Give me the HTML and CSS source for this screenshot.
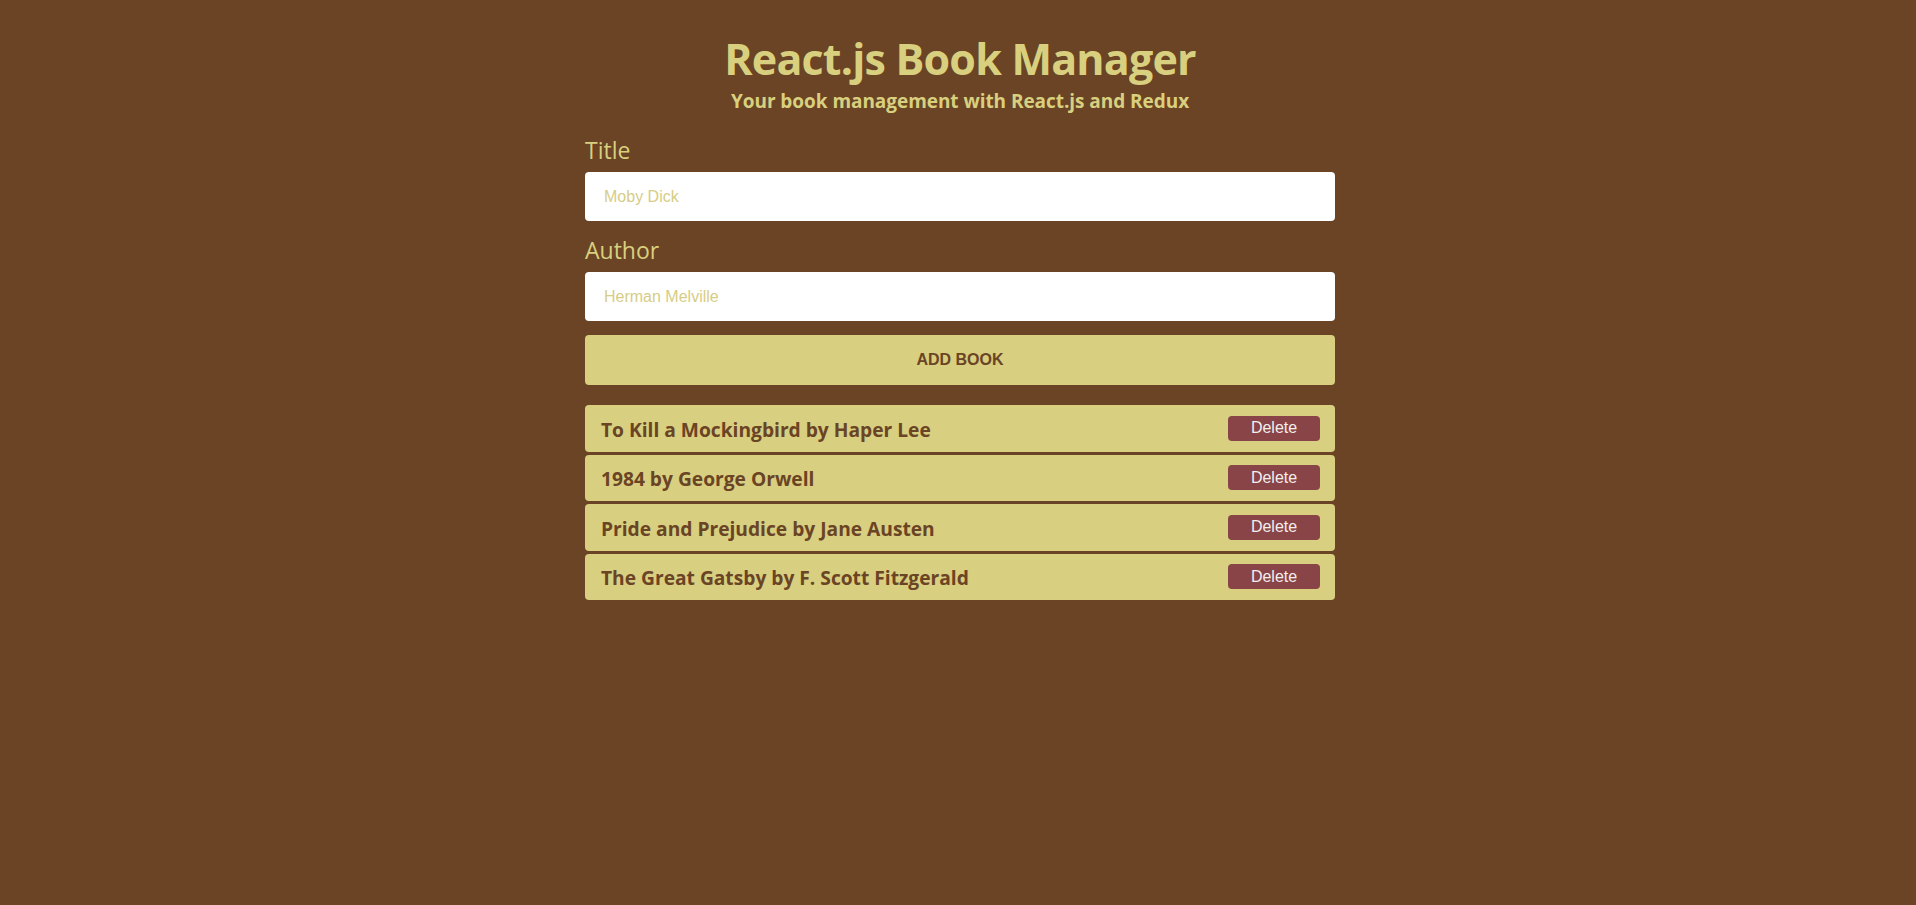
FILE: index.html
```html
<!DOCTYPE html>
<html lang="en">
<head>
<meta charset="utf-8">
<title>React.js Book Manager</title>
<link rel="stylesheet" href="styles.css">
</head>
<body>
<div class="app">
  <header class="header">
    <h1 class="title">React.js Book Manager</h1>
    <p class="subtitle">Your book management with React.js and Redux</p>
  </header>
  <form class="book-form">
    <div class="field">
      <label class="field-label" for="title">Title</label>
      <input class="field-input" id="title" type="text" placeholder="Moby Dick">
    </div>
    <div class="field">
      <label class="field-label" for="author">Author</label>
      <input class="field-input" id="author" type="text" placeholder="Herman Melville">
    </div>
    <button class="add-btn" type="button">ADD BOOK</button>
  </form>
  <ul class="book-list">
    <li class="book-item"><span class="book-text">To Kill a Mockingbird by Haper Lee</span><button class="delete-btn" type="button">Delete</button></li>
    <li class="book-item"><span class="book-text">1984 by George Orwell</span><button class="delete-btn" type="button">Delete</button></li>
    <li class="book-item"><span class="book-text">Pride and Prejudice by Jane Austen</span><button class="delete-btn" type="button">Delete</button></li>
    <li class="book-item"><span class="book-text">The Great Gatsby by F. Scott Fitzgerald</span><button class="delete-btn" type="button">Delete</button></li>
  </ul>
</div>
</body>
</html>
```
FILE: styles.css
```css
html, body {
  margin: 0;
  padding: 0;
  background: #6a4424;
  min-height: 100%;
}
body {
  padding-left: 4px;
  font-family: "Open Sans", "Noto Sans", sans-serif;
  color: #d9d07f;
}
.app {
  width: 750px;
  margin: 0 auto;
  padding-top: 33px;
}
.header {
  text-align: center;
}
.title {
  margin: 0;
  font-size: 43px;
  line-height: 52px;
  font-weight: 700;
  letter-spacing: -0.8px;
  color: #d9d07f;
}
.subtitle {
  margin: 4px 0 0;
  font-size: 19px;
  line-height: 24px;
  font-weight: 700;
  letter-spacing: -0.05px;
  color: #d9d07f;
}
.book-form {
  display: flex;
  flex-direction: column;
  gap: 15px;
  margin-top: 23px;
}
.field {
  display: flex;
  flex-direction: column;
  gap: 8px;
}
.field-label {
  font-size: 23px;
  line-height: 28px;
  font-weight: 400;
  color: #d9d07f;
}
.field-input {
  box-sizing: border-box;
  height: 49px;
  border: none;
  border-radius: 4px;
  background: #ffffff;
  padding: 0 19px;
  font-family: "Liberation Sans", Arial, sans-serif;
  font-size: 16px;
  color: #6a4424;
  outline: none;
}
.field-input::placeholder {
  color: #d6cd86;
  opacity: 1;
}
.add-btn {
  box-sizing: border-box;
  height: 49.5px;
  margin-top: -1px;
  border: none;
  border-radius: 4px;
  background: #d8cf80;
  color: #6a4424;
  font-family: "Liberation Sans", Arial, sans-serif;
  font-size: 16px;
  font-weight: 700;
  cursor: pointer;
}
.book-list {
  list-style: none;
  margin: 20.5px 0 0;
  padding: 0;
  display: flex;
  flex-direction: column;
  gap: 3px;
}
.book-item {
  box-sizing: border-box;
  height: 46.5px;
  display: flex;
  align-items: center;
  justify-content: space-between;
  padding: 0 15px 0 16px;
  background: #d8cf80;
  border-radius: 4px;
}
.book-text {
  margin-top: 2px;
  font-size: 19.2px;
  font-weight: 700;
  color: #6a4424;
}
.delete-btn {
  box-sizing: border-box;
  width: 92px;
  height: 25px;
  border: none;
  border-radius: 4px;
  background: #884446;
  color: #f3eeee;
  font-family: "Liberation Sans", Arial, sans-serif;
  font-size: 16px;
  padding: 0;
  cursor: pointer;
}
```
